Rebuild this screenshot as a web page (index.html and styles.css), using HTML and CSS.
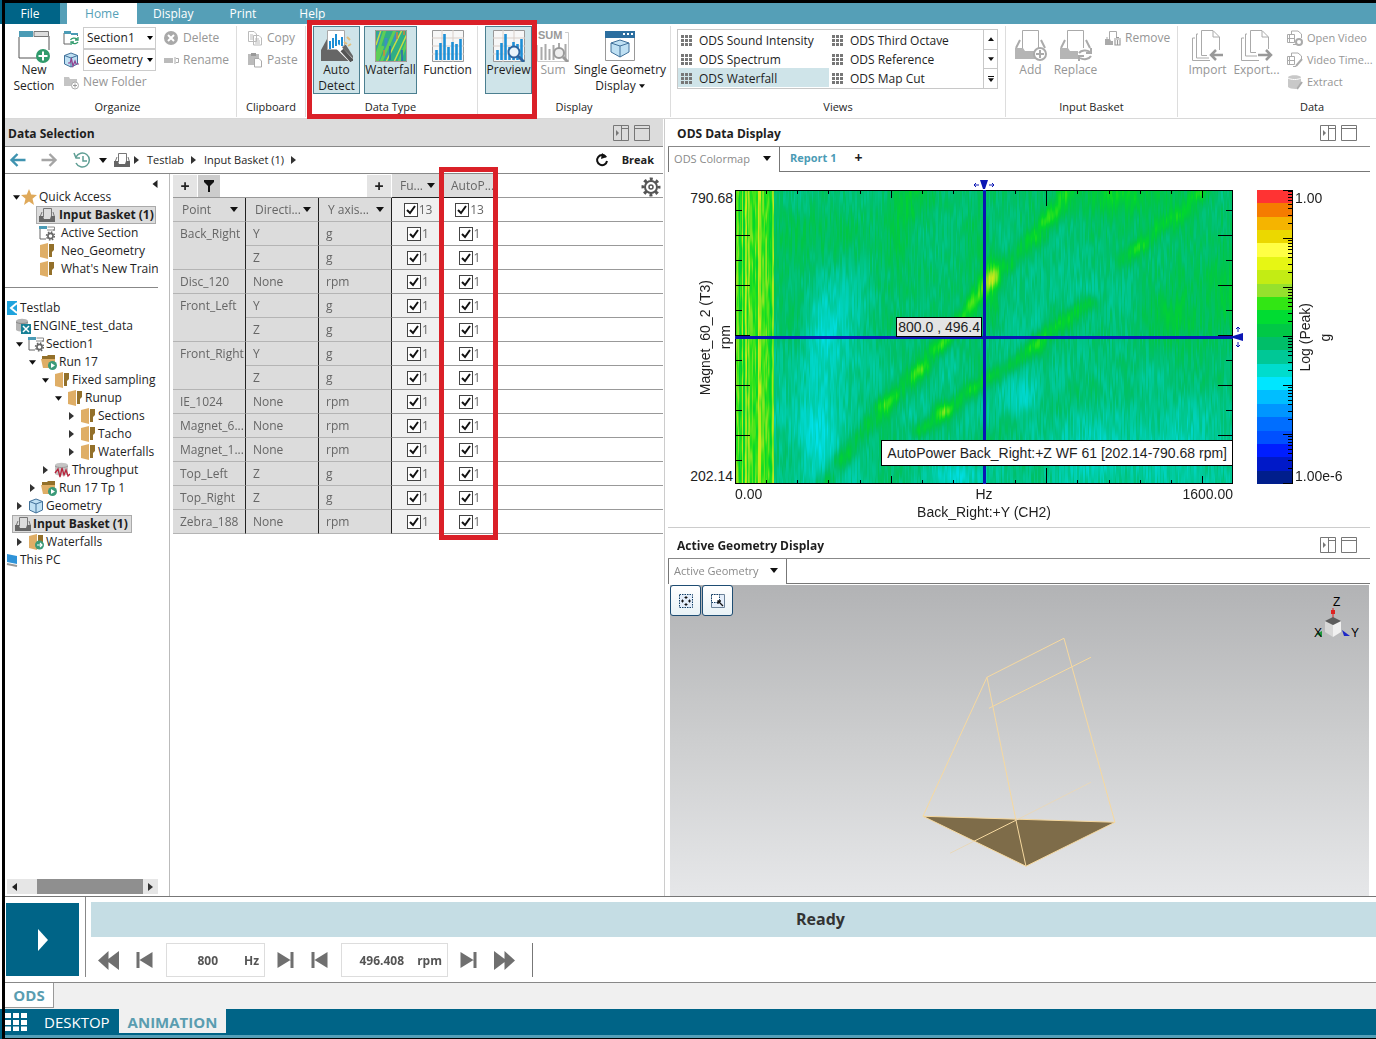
FILE: index.html
```html
<!DOCTYPE html>
<html lang="en">
<head>
<meta charset="utf-8">
<title>Testlab - Animation</title>
<link rel="stylesheet" href="styles.css">
</head>
<body>
<svg class="defs" width="0" height="0" aria-hidden="true">
  <defs>
    <symbol id="i-newsection" viewBox="0 0 32 34"><path d="M1 7V28H19M31 6V20" fill="none" stroke="#555"/><path d="M1 1H15V7H1z" fill="#4b9bb5"/><path d="M16 1.500H30.500V6.500H16z" fill="#ddd" stroke="#777"/><circle cx="25" cy="26" r="7" fill="#2f9a6b"/><path d="M25 21.500V30.500M20.500 26H29.500" stroke="#fff" stroke-width="2"/></symbol>
    <symbol id="i-sectionsync" viewBox="0 0 16 16"><path d="M1 3V14H7M14.500 4V6" fill="none" stroke="#666"/><path d="M1 1H8V4H1zM8 3H15V5H8z" fill="#4b9bb5"/><path d="M7.500 10A4 3 0 0 1 14 9M15 7V10H12M15 12A4 3 0 0 1 9 13M8 15V12H11" fill="none" stroke="#2f9a6b" stroke-width="1.300"/></symbol>
    <symbol id="i-cube" viewBox="0 0 16 16"><path d="M8 1L14.500 3.500V12L8 15L1.500 12V3.500z" fill="#bfe0f3" stroke="#41719a"/><path d="M1.500 3.500L8 6L14.500 3.500M8 6V15" fill="none" stroke="#41719a"/></symbol>
    <symbol id="i-cubewave" viewBox="0 0 16 16"><path d="M8 1L14.500 3.500V12L8 15L1.500 12V3.500z" fill="#bfe0f3" stroke="#41719a"/><path d="M1.500 3.500L8 6L14.500 3.500M8 6V15" fill="none" stroke="#41719a"/><path d="M5 11H7L8.500 7L10 14L12 9L13 12H16" fill="none" stroke="#93418f" stroke-width="1.200"/></symbol>
    <symbol id="i-newfolder" viewBox="0 0 16 16"><path d="M1 3H6L7 5H14V12H1z" fill="#c4c4c4"/><circle cx="12" cy="11.500" r="3.500" fill="#fff" stroke="#aaa"/><path d="M12 9.500V13.500M10 11.500H14" stroke="#999"/></symbol>
    <symbol id="i-delete" viewBox="0 0 16 16"><circle cx="8" cy="8" r="7" fill="#a9a9a9"/><path d="M5 5L11 11M11 5L5 11" stroke="#fff" stroke-width="2"/></symbol>
    <symbol id="i-rename" viewBox="0 0 16 16"><path d="M1 6H10V11H1z" fill="#bbb"/><path d="M13 6.500H15.500V10.500H13M12 5V12" fill="none" stroke="#aaa"/></symbol>
    <symbol id="i-copy" viewBox="0 0 16 16"><path d="M1.500 1.500H7L9.500 4V11.500H1.500zM6.500 5.500H12L14.500 8V15H6.500z" fill="#fff" stroke="#bbb"/><path d="M3 5H6M3 7H6M3 9H6M8 9H12M8 11H13M8 13H13" stroke="#bbb"/></symbol>
    <symbol id="i-paste" viewBox="0 0 16 16"><path d="M1 2H12V13H1z" fill="#bbb"/><path d="M4 1H9V4H4z" fill="#999"/><path d="M7.500 6.500H12L14.500 9V15H7.500z" fill="#fff" stroke="#aaa"/></symbol>
    <symbol id="i-auto" viewBox="0 0 32 32"><path d="M6 9L0 20V31H32V26L25 15z" fill="#666"/><path d="M6.500 .500H23.500V15L19 19.500H6.500z" fill="#fff" stroke="#aaa"/><path d="M9 19V11M12 18V8M15 16V4M18 17V10M21 16V7" stroke="#1d8fd6" stroke-width="2"/><path d="M16 16L30 30" stroke="#fff" stroke-width="5"/><path d="M21 20L31 31" stroke="#555" stroke-width="4"/><path d="M26 7L29 10M30 14L27 16M23 12L26 14" stroke="#e3bf7d" stroke-width="2"/></symbol>
    <symbol id="i-water" viewBox="0 0 32 32"><path d="M0 0H32V32H0z" fill="#2fae86"/><path d="M4 2V32M11 8V28M20 0V12" stroke="#3d8fc0" stroke-width="3"/><path d="M0 30L10 0M6 32L20 0M24 32L32 12M2 32L8 16" stroke="#5fce56" stroke-width="3"/><path d="M11 32L27 0M19 32L32 4M1 15L6 0" stroke="#c9dc45" stroke-width="1.500"/><path d="M15 16V30M27 20V32" stroke="#2a63b8" stroke-width="1.500"/><path d="M22 2V9M29 1V5M9 20V26" stroke="#d2813d" stroke-width="1.500"/><path d="M.500 .500H31.500V31.500H.500z" fill="none" stroke="#a99"/></symbol>
    <symbol id="i-func" viewBox="0 0 32 32"><path d="M.500 .500H31.500V31.500H.500z" fill="#f7f7f7" stroke="#999"/><path d="M0 8H32M0 16H32M0 24H32M10 0V32M21 0V32" stroke="#d9cfc9"/><path d="M4.500 30V20M8.500 30V13M12.500 30V4M16.500 30V17M20.500 30V12M24.500 30V14M28.500 30V9" stroke="#1d8fd6" stroke-width="2.600"/></symbol>
    <symbol id="i-preview" viewBox="0 0 32 32"><use href="#i-func"/><circle cx="21" cy="22" r="5.500" fill="#eaf4fa" stroke="#2c64a0" stroke-width="2"/><path d="M25 26L31 32" stroke="#2c64a0" stroke-width="3"/></symbol>
    <symbol id="i-sum" viewBox="0 0 32 32"><path d="M.500 15V31.500H31.500V15M28 2.500H31.500V15" fill="none" stroke="#ccc"/><path d="M4.500 30V17M8.500 30V14M12.500 30V19M16.500 30V15M28.500 30V14M22 18V13" stroke="#aaa" stroke-width="2"/><circle cx="22" cy="23" r="5" fill="#eee" stroke="#999" stroke-width="2"/><path d="M26 27L31 32" stroke="#999" stroke-width="3"/></symbol>
    <symbol id="i-single" viewBox="0 0 32 32"><path d="M1.500 2V30.500H30.500V2" fill="#fff" stroke="#999"/><path d="M1 1H31V8H1z" fill="#2c6e9f"/><path d="M19 4H21M23 4H25M27 4H29" stroke="#fff" stroke-width="2"/><path d="M16 10L25 13V22L16 27L7 22V13z" fill="#bfe0f3" stroke="#41719a"/><path d="M7 13L16 16L25 13M16 16V27" fill="none" stroke="#41719a"/></symbol>
    <symbol id="i-grid9" viewBox="0 0 12 12"><path d="M0 1.500H3M4 1.500H7M8 1.500H11M0 5.500H3M4 5.500H7M8 5.500H11M0 9.500H3M4 9.500H7M8 9.500H11" stroke="#777" stroke-width="3"/></symbol>
    <symbol id="i-add" viewBox="0 0 32 32"><path d="M7.500 18V.500H23.500V18" fill="none" stroke="#aaa"/><path d="M5 10L1 18M26 10L30 18" fill="none" stroke="#aaa" stroke-width="2"/><path d="M0 18H8L10 21H20V29H0z" fill="#b5b5b5"/><circle cx="25" cy="24" r="6" fill="#fff" stroke="#aaa" stroke-width="2"/><path d="M25 20V28M21 24H29" stroke="#aaa" stroke-width="2"/></symbol>
    <symbol id="i-replace" viewBox="0 0 32 32"><path d="M7.500 18V.500H23.500V18" fill="none" stroke="#aaa"/><path d="M5 10L1 18M26 10L30 18" fill="none" stroke="#aaa" stroke-width="2"/><path d="M0 18H8L10 21H18V29H0z" fill="#b5b5b5"/><path d="M19 23A7 5 0 0 1 30 22M31 18V23H26M31 26A7 5 0 0 1 20 28M19 31V26H24" fill="none" stroke="#aaa" stroke-width="2"/></symbol>
    <symbol id="i-remove" viewBox="0 0 16 16"><path d="M4.500 9V1.500H11.500V7M2 7V9" fill="none" stroke="#aaa"/><path d="M0 9H5L6 11H8V15H0z" fill="#aaa"/><path d="M9 9H16M10 10V15H15V10M12.500 10V15M11 7.500H14" fill="none" stroke="#999" stroke-width="1.200"/></symbol>
    <symbol id="i-import" viewBox="0 0 32 32"><path d="M15 25.500H9.500V.500H21L27.500 7V20M21 1V7H27M6 4H4.500V28H17M3 8H.500V30.500H18" fill="none" stroke="#aaa"/><path d="M31 25H19M24 20L19 25L24 30" fill="none" stroke="#999" stroke-width="2.500"/></symbol>
    <symbol id="i-export" viewBox="0 0 32 32"><path d="M15 22.500H9.500V.500H21L27.500 7V19M21 1V7H27M6 4H4.500V26H16M3 8H.500V30.500H18" fill="none" stroke="#aaa"/><path d="M17 25H30M25 20L30 25L25 30" fill="none" stroke="#999" stroke-width="2.500"/></symbol>
    <symbol id="i-video" viewBox="0 0 16 16"><path d="M4.500 4V1H11L14.500 4V8M.500 4.500H7.500V12.500H.500zM2.500 5V12M.500 8.500H7.500M6 14.500H10" fill="none" stroke="#aaa"/><circle cx="12" cy="12" r="3" fill="none" stroke="#aaa" stroke-width="2"/></symbol>
    <symbol id="i-videotime" viewBox="0 0 16 16"><path d="M4.500 4V1H11L14.500 4V8M.500 4.500H7.500V12.500H.500zM2.500 5V12M.500 8.500H7.500M6 14.500H9" fill="none" stroke="#aaa"/><path d="M15 7L9 14" stroke="#aaa" stroke-width="2"/></symbol>
    <symbol id="i-extract" viewBox="0 0 16 16"><path d="M1 3C3 .500 12 .500 14 3V9L9 15C5 15 2 14 1 13z" fill="#c8c8c8"/><path d="M1 4C4 6 11 6 14 4" fill="none" stroke="#fff"/><path d="M15 8L10 15" stroke="#aaa" stroke-width="2"/></symbol>
    <symbol id="i-basket" viewBox="0 0 16 16"><path d="M4.500 10V1.500H12.500V10M3 5L1 10M14 5L15.500 10" fill="none" stroke="#777"/><path d="M0 9H4L5 12H11L12 9H16V15H0z" fill="#666"/></symbol>
    <symbol id="i-section" viewBox="0 0 16 16"><path d="M1 3V14H7M15 4V6" fill="none" stroke="#666"/><path d="M0 1H8V4H0z" fill="#4b9bb5"/><path d="M8.500 2H15.500V5H8" fill="none" stroke="#888"/><circle cx="11.500" cy="11" r="2.600" fill="#fff" stroke="#666" stroke-width="1.600"/><circle cx="11.500" cy="11" r="4" fill="none" stroke="#666" stroke-width="1.400" stroke-dasharray="1.500 1.640"/></symbol>
    <symbol id="i-folder" viewBox="0 0 16 16"><path d="M1 2L9 0V16L1 14z" fill="#dfae66"/><path d="M10 1H15V7L13 9V14H10z" fill="#93702a"/></symbol>
    <symbol id="i-run" viewBox="0 0 16 16"><path d="M1 2H6L7 1H14V5H1z" fill="#93702a"/><path d="M0 5H14V14H2z" fill="#dfae66"/><circle cx="11.500" cy="11.500" r="4.500" fill="#3a9a78"/><path d="M10 9L14 11.500L10 14z" fill="#fff"/></symbol>
    <symbol id="i-wfolder" viewBox="0 0 16 16"><path d="M1 2L9 0V16L1 14z" fill="#dfae66"/><path d="M10 1H15V9H10z" fill="#93702a"/><circle cx="11.500" cy="11" r="4.500" fill="#3a9a78"/><path d="M9 11H14M12 9L14 11L12 13" fill="none" stroke="#fff" stroke-width="1.200"/></symbol>
    <symbol id="i-db" viewBox="0 0 16 16"><path d="M1 3C2 0 12 0 13 3V12C11 14 3 14 1 12z" fill="#b5b5b5"/><path d="M1 4C3 6 11 6 13 4" fill="none" stroke="#888"/><path d="M6 6H16V16H6z" fill="#178096"/><path d="M8 8L14 14M14 8L8 14" stroke="#fff" stroke-width="1.500"/></symbol>
    <symbol id="i-through" viewBox="0 0 16 16"><path d="M1 3C2 0 13 0 14 3V12C12 14 3 14 1 12z" fill="#c4c4c4"/><path d="M1 4C3 6 12 6 14 4" fill="none" stroke="#999"/><path d="M1 11L4 7L6 15L8 6L10 13L12 8L14 14L16 12" fill="none" stroke="#b9243c" stroke-width="1.300"/></symbol>
    <symbol id="i-testlab" viewBox="0 0 16 16"><path d="M5 1H15V15H5z" fill="#1fa3dd"/><path d="M15 3L9 8L15 13" fill="none" stroke="#fff" stroke-width="2"/></symbol>
    <symbol id="i-pc" viewBox="0 0 16 16"><path d="M5 2L15 4V12L5 10z" fill="#2f93d8"/><path d="M5 12L15 14" stroke="#999" stroke-width="2"/></symbol>
    <symbol id="i-star" viewBox="0 0 16 16"><path d="M8 0L10.200 5.500L16 6L11.500 9.800L13 16L8 12.500L3 16L4.500 9.800L0 6L5.800 5.500z" fill="#dfa95a"/></symbol>
    <symbol id="i-back" viewBox="0 0 16 14"><path d="M16 7H2M8 1L2 7L8 13" fill="none" stroke="#3f93b0" stroke-width="2.400"/></symbol>
    <symbol id="i-fwd" viewBox="0 0 16 14"><path d="M0 7H14M8 1L14 7L8 13" fill="none" stroke="#a5a5a5" stroke-width="2.400"/></symbol>
    <symbol id="i-history" viewBox="0 0 18 16"><path d="M3 5A7 7 0 1 1 3 11M1 1L3 6H7M10 4V9H14" fill="none" stroke="#5f9e94" stroke-width="1.500"/></symbol>
    <symbol id="i-refresh" viewBox="0 0 14 14"><path d="M11 4A5 5 0 1 0 12 8" fill="none" stroke="#111" stroke-width="2"/><path d="M7 0L12 4L6 6z" fill="#111"/></symbol>
    <symbol id="i-gear" viewBox="0 0 20 20"><circle cx="10" cy="10" r="6" fill="none" stroke="#555" stroke-width="2"/><circle cx="10" cy="10" r="8" fill="none" stroke="#555" stroke-width="3" stroke-dasharray="3 3.283" stroke-dashoffset="1.500"/><circle cx="10" cy="10" r="2" fill="none" stroke="#555" stroke-width="1.500"/></symbol>
    <symbol id="i-dock" viewBox="0 0 16 16"><path d="M.500 .500H15.500V15.500H.500zM8.500 .500V15.500M8.500 3.500H15.500" fill="none" stroke="#777"/><path d="M3 5L6 8L3 11z" fill="#777"/></symbol>
    <symbol id="i-max" viewBox="0 0 16 16"><path d="M.500 .500H15.500V15.500H.500zM.500 3.500H15.500" fill="none" stroke="#777"/></symbol>
    <symbol id="i-down" viewBox="0 0 8 5"><path d="M0 0H8L4 5z" fill="#111"/></symbol>
    <symbol id="i-right" viewBox="0 0 5 8"><path d="M0 0V8L5 4z" fill="#333"/></symbol>
    <symbol id="i-left" viewBox="0 0 5 8"><path d="M5 0V8L0 4z" fill="#222"/></symbol>
    <symbol id="i-filter" viewBox="0 0 10 12"><path d="M0 0H10V2L6 6V12H4V6L0 2z" fill="#111"/></symbol>
    <symbol id="i-rew" viewBox="0 0 20 18"><path d="M10 0V18L0 9zM20 0V18L8 9z" fill="#6f6f6f"/></symbol>
    <symbol id="i-ff" viewBox="0 0 20 18"><path d="M10 0V18L20 9zM0 0V18L12 9z" fill="#6f6f6f"/></symbol>
    <symbol id="i-prev" viewBox="0 0 16 16"><path d="M0 0H3V16H0zM16 0V16L3 8z" fill="#6f6f6f"/></symbol>
    <symbol id="i-next" viewBox="0 0 16 16"><path d="M13 0H16V16H13zM0 0V16L13 8z" fill="#6f6f6f"/></symbol>
  </defs>
</svg>

<div class="window">
  <nav class="menubar">
    <button class="menu menu-file">File</button>
    <button class="menu menu-home">Home</button>
    <button class="menu menu-display">Display</button>
    <button class="menu menu-print">Print</button>
    <button class="menu">Help</button>
  </nav>

  <header class="ribbon">
    <section class="group g-organize">
      <div class="group-body">
        <button class="big"><svg class="ic32 tall"><use href="#i-newsection"/></svg><span>New<br>Section</span></button>
        <div class="stack">
          <div class="field"><svg class="ic16"><use href="#i-sectionsync"/></svg><select class="combo" aria-label="Section"><option>Section1</option></select></div>
          <div class="field"><svg class="ic16"><use href="#i-cubewave"/></svg><select class="combo" aria-label="Geometry"><option>Geometry</option></select></div>
          <button class="small off"><svg class="ic16"><use href="#i-newfolder"/></svg>New Folder</button>
        </div>
        <div class="stack actions">
          <button class="small off"><svg class="ic16"><use href="#i-delete"/></svg>Delete</button>
          <button class="small off"><svg class="ic16"><use href="#i-rename"/></svg>Rename</button>
        </div>
      </div>
      <h2>Organize</h2>
    </section>
    <section class="group g-clipboard">
      <div class="group-body"><div class="stack">
        <button class="small off"><svg class="ic16"><use href="#i-copy"/></svg>Copy</button>
        <button class="small off"><svg class="ic16"><use href="#i-paste"/></svg>Paste</button>
      </div></div>
      <h2>Clipboard</h2>
    </section>
    <section class="group g-type">
      <div class="group-body">
        <button class="big on"><svg class="ic32"><use href="#i-auto"/></svg><span>Auto<br>Detect</span></button>
        <button class="big on"><svg class="ic32"><use href="#i-water"/></svg><span>Waterfall</span></button>
        <button class="big"><svg class="ic32"><use href="#i-func"/></svg><span>Function</span></button>
      </div>
      <h2>Data Type</h2>
    </section>
    <section class="group g-display">
      <div class="group-body">
        <button class="big on"><svg class="ic32"><use href="#i-preview"/></svg><span>Preview</span></button>
        <button class="big off sum"><svg class="ic32"><use href="#i-sum"/></svg><b class="sum-tag">SUM</b><span>Sum</span></button>
        <button class="big single"><svg class="ic32"><use href="#i-single"/></svg><span>Single Geometry<br>Display <svg class="caret"><use href="#i-down"/></svg></span></button>
      </div>
      <h2>Display</h2>
    </section>
    <section class="group g-views">
      <div class="group-body">
        <div class="gallery">
          <div class="views">
            <button><svg class="ic12"><use href="#i-grid9"/></svg>ODS Sound Intensity</button>
            <button><svg class="ic12"><use href="#i-grid9"/></svg>ODS Third Octave</button>
            <button><svg class="ic12"><use href="#i-grid9"/></svg>ODS Spectrum</button>
            <button><svg class="ic12"><use href="#i-grid9"/></svg>ODS Reference</button>
            <button class="current"><svg class="ic12"><use href="#i-grid9"/></svg>ODS Waterfall</button>
            <button><svg class="ic12"><use href="#i-grid9"/></svg>ODS Map Cut</button>
          </div>
          <div class="spin">
            <button aria-label="Up"><svg class="caret up"><use href="#i-down"/></svg></button>
            <button aria-label="Down"><svg class="caret"><use href="#i-down"/></svg></button>
            <button aria-label="More" class="more"><svg class="caret"><use href="#i-down"/></svg></button>
          </div>
        </div>
      </div>
      <h2>Views</h2>
    </section>
    <section class="group g-basket">
      <div class="group-body">
        <button class="big off"><svg class="ic32"><use href="#i-add"/></svg><span>Add</span></button>
        <button class="big off"><svg class="ic32"><use href="#i-replace"/></svg><span>Replace</span></button>
        <div class="stack"><button class="small off"><svg class="ic16"><use href="#i-remove"/></svg>Remove</button></div>
      </div>
      <h2>Input Basket</h2>
    </section>
    <section class="group g-data">
      <div class="group-body">
        <button class="big off"><svg class="ic32"><use href="#i-import"/></svg><span>Import</span></button>
        <button class="big off"><svg class="ic32"><use href="#i-export"/></svg><span>Export...</span></button>
        <div class="stack">
          <button class="small off"><svg class="ic16"><use href="#i-video"/></svg>Open Video</button>
          <button class="small off"><svg class="ic16"><use href="#i-videotime"/></svg>Video Time...</button>
          <button class="small off"><svg class="ic16"><use href="#i-extract"/></svg>Extract</button>
        </div>
      </div>
      <h2>Data</h2>
    </section>
    <div class="mark mark-ribbon"></div>
  </header>

  <main class="main">
    <section class="selection">
      <div class="titlebar grey"><h1>Data Selection</h1><span class="winbtns"><svg class="ic16"><use href="#i-dock"/></svg><svg class="ic16"><use href="#i-max"/></svg></span></div>
      <div class="crumbs">
        <button aria-label="Back"><svg class="arrow"><use href="#i-back"/></svg></button>
        <button aria-label="Forward" class="fwd"><svg class="arrow"><use href="#i-fwd"/></svg></button>
        <button aria-label="History" class="hist"><svg class="history"><use href="#i-history"/></svg><svg class="caret"><use href="#i-down"/></svg></button>
        <svg class="ic16"><use href="#i-basket"/></svg><svg class="tri"><use href="#i-right"/></svg>
        <a href="#testlab">Testlab</a><svg class="tri"><use href="#i-right"/></svg>
        <a href="#basket">Input Basket (1)</a><svg class="tri"><use href="#i-right"/></svg>
        <button class="break"><svg class="ic14"><use href="#i-refresh"/></svg>Break</button>
      </div>
      <div class="selection-body">
        <aside class="side">
          <svg class="collapse"><use href="#i-left"/></svg>
          <ul class="tree quick">
            <li><div class="node"><svg class="down"><use href="#i-down"/></svg><svg class="ic16"><use href="#i-star"/></svg>Quick Access</div>
              <ul>
                <li><div class="node leaf"><span class="picked"><svg class="ic16"><use href="#i-basket"/></svg>Input Basket (1)</span></div></li>
                <li><div class="node leaf"><svg class="ic16"><use href="#i-section"/></svg>Active Section</div></li>
                <li><div class="node leaf"><svg class="ic16"><use href="#i-folder"/></svg>Neo_Geometry</div></li>
                <li><div class="node leaf"><svg class="ic16"><use href="#i-folder"/></svg>What's New Training</div></li>
              </ul></li>
          </ul>
          <ul class="tree places">
            <li><div class="node leaf"><svg class="ic16"><use href="#i-testlab"/></svg>Testlab</div>
              <ul>
                <li><div class="node leaf"><svg class="ic16"><use href="#i-db"/></svg>ENGINE_test_data</div>
                  <ul>
                    <li><div class="node"><svg class="down"><use href="#i-down"/></svg><svg class="ic16"><use href="#i-section"/></svg>Section1</div>
                      <ul>
                        <li><div class="node"><svg class="down"><use href="#i-down"/></svg><svg class="ic16"><use href="#i-run"/></svg>Run 17</div>
                          <ul>
                            <li><div class="node"><svg class="down"><use href="#i-down"/></svg><svg class="ic16"><use href="#i-folder"/></svg>Fixed sampling</div>
                              <ul>
                                <li><div class="node"><svg class="down"><use href="#i-down"/></svg><svg class="ic16"><use href="#i-folder"/></svg>Runup</div>
                                  <ul>
                                    <li><div class="node"><svg class="side-tri"><use href="#i-right"/></svg><svg class="ic16"><use href="#i-folder"/></svg>Sections</div></li>
                                    <li><div class="node"><svg class="side-tri"><use href="#i-right"/></svg><svg class="ic16"><use href="#i-folder"/></svg>Tacho</div></li>
                                    <li><div class="node"><svg class="side-tri"><use href="#i-right"/></svg><svg class="ic16"><use href="#i-folder"/></svg>Waterfalls</div></li>
                                  </ul></li>
                              </ul></li>
                            <li><div class="node"><svg class="side-tri"><use href="#i-right"/></svg><svg class="ic16"><use href="#i-through"/></svg>Throughput</div></li>
                          </ul></li>
                        <li><div class="node"><svg class="side-tri"><use href="#i-right"/></svg><svg class="ic16"><use href="#i-run"/></svg>Run 17 Tp 1</div></li>
                      </ul></li>
                    <li><div class="node"><svg class="side-tri"><use href="#i-right"/></svg><svg class="ic16"><use href="#i-cube"/></svg>Geometry</div></li>
                  </ul></li>
                <li><div class="node leaf"><span class="picked"><svg class="ic16"><use href="#i-basket"/></svg>Input Basket (1)</span></div>
                  <ul>
                    <li><div class="node"><svg class="side-tri"><use href="#i-right"/></svg><svg class="ic16"><use href="#i-wfolder"/></svg>Waterfalls</div></li>
                  </ul></li>
              </ul></li>
            <li><div class="node leaf"><svg class="ic16"><use href="#i-pc"/></svg>This PC</div></li>
          </ul>
          <div class="scroll"><svg class="side-tri"><use href="#i-left"/></svg><div class="thumb"></div><svg class="side-tri"><use href="#i-right"/></svg></div>
        </aside>
        <div class="grid-area">
          <table class="pivot">
            <colgroup><col class="c-key"><col class="c-key"><col class="c-key"><col class="c-fun"><col class="c-auto"><col></colgroup>
            <thead>
              <tr class="tools">
                <th colspan="3"><div class="toolrow"><button aria-label="Add row field">+</button><button class="filter" aria-label="Filter"><svg class="funnel"><use href="#i-filter"/></svg></button><button class="last" aria-label="Add column field">+</button></div></th>
                <th class="colhead"><span>Fu...</span><svg class="caret"><use href="#i-down"/></svg></th>
                <th class="colhead">AutoP...</th>
                <th class="rest"><svg class="gear"><use href="#i-gear"/></svg></th>
              </tr>
              <tr class="fields">
                <th class="key"><div>Point<svg class="caret"><use href="#i-down"/></svg></div></th>
                <th class="key"><div>Directi...<svg class="caret"><use href="#i-down"/></svg></div></th>
                <th class="key"><div>Y axis...<svg class="caret"><use href="#i-down"/></svg></div></th>
                <td class="fun"><label><input type="checkbox" checked>13</label></td><td class="auto"><label><input type="checkbox" checked>13</label></td><td></td>
              </tr>
            </thead>
            <tbody>
              <tr><th class="key" rowspan="2">Back_Right</th><td class="key">Y</td><td class="key">g</td><td class="fun"><label><input type="checkbox" checked>1</label></td><td class="auto"><label><input type="checkbox" checked>1</label></td><td></td></tr>
              <tr><td class="key">Z</td><td class="key">g</td><td class="fun"><label><input type="checkbox" checked>1</label></td><td class="auto"><label><input type="checkbox" checked>1</label></td><td></td></tr>
              <tr><th class="key">Disc_120</th><td class="key">None</td><td class="key">rpm</td><td class="fun"><label><input type="checkbox" checked>1</label></td><td class="auto"><label><input type="checkbox" checked>1</label></td><td></td></tr>
              <tr><th class="key" rowspan="2">Front_Left</th><td class="key">Y</td><td class="key">g</td><td class="fun"><label><input type="checkbox" checked>1</label></td><td class="auto"><label><input type="checkbox" checked>1</label></td><td></td></tr>
              <tr><td class="key">Z</td><td class="key">g</td><td class="fun"><label><input type="checkbox" checked>1</label></td><td class="auto"><label><input type="checkbox" checked>1</label></td><td></td></tr>
              <tr><th class="key" rowspan="2">Front_Right</th><td class="key">Y</td><td class="key">g</td><td class="fun"><label><input type="checkbox" checked>1</label></td><td class="auto"><label><input type="checkbox" checked>1</label></td><td></td></tr>
              <tr><td class="key">Z</td><td class="key">g</td><td class="fun"><label><input type="checkbox" checked>1</label></td><td class="auto"><label><input type="checkbox" checked>1</label></td><td></td></tr>
              <tr><th class="key">IE_1024</th><td class="key">None</td><td class="key">rpm</td><td class="fun"><label><input type="checkbox" checked>1</label></td><td class="auto"><label><input type="checkbox" checked>1</label></td><td></td></tr>
              <tr><th class="key">Magnet_6...</th><td class="key">None</td><td class="key">rpm</td><td class="fun"><label><input type="checkbox" checked>1</label></td><td class="auto"><label><input type="checkbox" checked>1</label></td><td></td></tr>
              <tr><th class="key">Magnet_1...</th><td class="key">None</td><td class="key">rpm</td><td class="fun"><label><input type="checkbox" checked>1</label></td><td class="auto"><label><input type="checkbox" checked>1</label></td><td></td></tr>
              <tr><th class="key">Top_Left</th><td class="key">Z</td><td class="key">g</td><td class="fun"><label><input type="checkbox" checked>1</label></td><td class="auto"><label><input type="checkbox" checked>1</label></td><td></td></tr>
              <tr><th class="key">Top_Right</th><td class="key">Z</td><td class="key">g</td><td class="fun"><label><input type="checkbox" checked>1</label></td><td class="auto"><label><input type="checkbox" checked>1</label></td><td></td></tr>
              <tr><th class="key">Zebra_188</th><td class="key">None</td><td class="key">rpm</td><td class="fun"><label><input type="checkbox" checked>1</label></td><td class="auto"><label><input type="checkbox" checked>1</label></td><td></td></tr>
            </tbody>
          </table>
          <div class="mark mark-column"></div>
        </div>
      </div>
    </section>

    <div class="displays">
      <section class="pane pane-plot">
        <div class="titlebar"><h1>ODS Data Display</h1><span class="winbtns"><svg class="ic16"><use href="#i-dock"/></svg><svg class="ic16"><use href="#i-max"/></svg></span></div>
        <div class="tabs"><button class="tab">ODS Colormap<svg class="caret"><use href="#i-down"/></svg></button><div class="tabline"><button class="report">Report 1</button><button class="plus" aria-label="Add report">+</button></div></div>
        <div class="plot">
          <div class="yaxis"><span>790.68</span><div class="vert">Magnet_60_2 (T3)<br>rpm</div><span>202.14</span></div>
          <div class="map">
            <canvas id="map"></canvas>
            <div class="cross-v"></div><div class="cross-h"></div>
            <svg class="grip-top" viewBox="0 0 22 10"><path d="M7 0H15L12 9H10z" fill="#0b16b4"/><path d="M6 5H1M3 3L1 5L3 7M16 5H21M19 3L21 5L19 7" fill="none" stroke="#0b16b4"/></svg>
            <svg class="grip-right" viewBox="0 0 10 22"><path d="M10 7V15L0 12V10z" fill="#0b16b4"/><path d="M5 6V1M3 3L5 1L7 3M5 16V21M3 19L5 21L7 19" fill="none" stroke="#0b16b4"/></svg>
            <div class="readout">800.0 , 496.4</div>
            <div class="legend">AutoPower Back_Right:+Z WF 61 [202.14-790.68 rpm]</div>
          </div>
          <canvas id="scale"></canvas>
          <div class="zaxis"><span>1.00</span><div class="vert">Log (Peak)<br>g</div><span>1.00e-6</span></div>
          <div class="xaxis"><span>0.00</span><span>Hz</span><span>1600.00</span></div>
          <div class="xname">Back_Right:+Y (CH2)</div>
        </div>
      </section>
      <section class="pane pane-geo">
        <div class="titlebar"><h1>Active Geometry Display</h1><span class="winbtns"><svg class="ic16"><use href="#i-dock"/></svg><svg class="ic16"><use href="#i-max"/></svg></span></div>
        <div class="tabs"><button class="tab">Active Geometry<svg class="caret"><use href="#i-down"/></svg></button><div class="tabline"></div></div>
        <div class="scene">
          <svg class="model" viewBox="670 585 699 310"><path d="M923 816L1115 822L1026 866z" fill="#7e6c49"/><path d="M923 816L987 677L1064 638L1115 822L1026 866L923 816L1115 822M987 677L1016 820L1026 866M989 708L1091 657" fill="none" stroke="#f6d9a0"/><path d="M950 853L974 841M1016 820L1091 782" fill="none" stroke="#e8d8bb"/><path d="M974 841L1016 820" stroke="#f6d9a0"/></svg>
          <div class="tools3d">
            <button aria-label="Fit"><svg viewBox="0 0 16 16" class="ic16"><path d="M1.500 1.500H14.500V14.500H1.500z" fill="#e4eefa" stroke="#123f66" stroke-dasharray="1.500 1"/><path d="M8 3V6M8 10V13M3 8H6M10 8H13M6.500 4.500H9.500M6.500 11.500H9.500M4.500 6.500V9.500M11.500 6.500V9.500" stroke="#111"/></svg></button>
            <button aria-label="Zoom area"><svg viewBox="0 0 16 16" class="ic16"><path d="M1.500 1.500H14.500V14.500H1.500z" fill="#e4eefa" stroke="#6b8299"/><path d="M1.500 1.500H9.500V9.500H1.500z" fill="#fff" stroke="#123f66" stroke-dasharray="1.500 1"/><path d="M8 8L13 13M8 11V8H11" fill="none" stroke="#111" stroke-width="1.300"/></svg></button>
          </div>
          <svg class="triad" viewBox="0 0 48 48"><text x="20" y="12">Z</text><path d="M20 14V24" stroke="#d22" /><path d="M18 16H22V20H18z" fill="#d22"/><path d="M12 27L20 31V43L12 38z" fill="#d8d8d8"/><path d="M20 31L28 27V38L20 43z" fill="#f0f0f0"/><path d="M12 27L20 23L28 27L20 31z" fill="#5c5c5c"/><path d="M3 40L9 37V43z" fill="#1e9a3a"/><path d="M29 36L37 42L31 42z" fill="#1e28c8"/><text x="1" y="43">X</text><text x="38" y="43">Y</text></svg>
        </div>
      </section>
    </div>
  </main>

  <section class="player">
    <button class="play" aria-label="Play"><svg viewBox="0 0 10 22" class="playtri"><path d="M0 0V22L10 11z" fill="#fff"/></svg></button>
    <div class="player-main">
      <div class="status">Ready</div>
      <div class="transport">
        <button aria-label="Fast back"><svg class="seek"><use href="#i-rew"/></svg></button>
        <button aria-label="Previous frequency"><svg class="step"><use href="#i-prev"/></svg></button>
        <label class="value"><input type="text" value="800" aria-label="Frequency">Hz</label>
        <button aria-label="Next frequency"><svg class="step"><use href="#i-next"/></svg></button>
        <button aria-label="Previous speed"><svg class="step"><use href="#i-prev"/></svg></button>
        <label class="value wide"><input type="text" value="496.408" aria-label="Speed">rpm</label>
        <button aria-label="Next speed"><svg class="step"><use href="#i-next"/></svg></button>
        <button aria-label="Fast forward"><svg class="seek"><use href="#i-ff"/></svg></button>
        <div class="endline"></div>
      </div>
    </div>
  </section>
  <div class="sheets"><button class="sheet">ODS</button></div>
  <footer class="taskbar">
    <svg class="apps" viewBox="0 0 23 18"><path d="M0 2.500H6M8 2.500H14M16 2.500H22M0 9.500H6M8 9.500H14M16 9.500H22M0 16H6M8 16H14M16 16H22" stroke="#fff" stroke-width="5"/></svg>
    <button class="task">DESKTOP</button><button class="task active">ANIMATION</button>
  </footer>
</div>
<script src="app.js"></script>
</body>
</html>
```
FILE: styles.css
```css
* { box-sizing: border-box; }
html, body { height: 100%; }
body {
  margin: 0;
  padding-left: 2px;
  font: 12px/16px "Open Sans", "Noto Sans", sans-serif;
  color: #1e1e1e;
  background: linear-gradient(#006487 24px, #fff 24px, #fff calc(100% - 30px), #006487 calc(100% - 30px));
}
button, input, select { font: inherit; color: inherit; border: 0; margin: 0; padding: 0; background: none; }
button { display: flex; align-items: center; white-space: nowrap; }
h1, h2 { margin: 0; font-size: 12px; }
svg { flex: none; display: block; }
a { color: inherit; text-decoration: none; }
ul { list-style: none; margin: 0; padding: 0; }
.defs { position: absolute; }
.ic12 { width: 12px; height: 12px; }
.ic14 { width: 14px; height: 14px; }
.ic16 { width: 16px; height: 16px; }
.ic32 { width: 32px; height: 32px; }
.caret { width: 8px; height: 5px; }
.tri, .side-tri { width: 5px; height: 8px; }

.window {
  display: flex;
  flex-direction: column;
  min-height: 100%;
  background: #fff;
  border-left: 3px solid #000;
  border-top: 3px solid #000;
  border-bottom: 1px solid #000;
  overflow: hidden;
}

/* menu strip */
.menubar { display: flex; height: 21px; background: #559fb7; color: #fff; }
.menu { justify-content: center; padding-right: 43px; }
.menu-file { width: 55px; padding: 0 5px 0 0; margin-right: 7px; background: #006487; }
.menu-home { width: 70px; padding: 0; margin-right: 16px; background: #fff; color: #559fb7; }
.menu-display { padding-right: 36px; }

/* ribbon */
.ribbon { display: flex; position: relative; height: 95px; border-bottom: 1px solid #d8d8d8; }
.group { flex: none; display: flex; flex-direction: column; justify-content: space-between; border-right: 1px solid #ddd; margin-top: 2px; margin-bottom: 1px; }
.group h2 { font-weight: 400; font-size: 11px; text-align: center; line-height: 20px; }
.group-body { display: flex; height: 68px; }
.big { flex-direction: column; align-items: center; height: 68px; padding-top: 3px; border: 1px solid transparent; line-height: 16px; }
.big span { text-align: center; }
.big .caret { display: inline-block; width: 6px; height: 4px; vertical-align: 2px; }
.tall { height: 34px; margin-bottom: -2px; }
.on { background: #cfe4e9; border-color: #4b7f90; }
.off { color: #969696; }
.stack { display: flex; flex-direction: column; padding-top: 1px; }
.small, .field { display: flex; align-items: center; gap: 4px; height: 22px; }
.combo { width: 73px; height: 22px; padding: 0 3px; border: 1px solid #ccc; appearance: none; background: url("data:image/svg+xml,%3Csvg xmlns='http://www.w3.org/2000/svg' width='6' height='4'%3E%3Cpath d='M0 0H6L3 4z'/%3E%3C/svg%3E") no-repeat right 2px center; }
.g-organize { width: 232px; }
.g-organize .big { width: 58px; }
.g-organize .stack:nth-child(2) { margin-right: 7px; }
.g-organize h2 { padding-right: 6px; }
.g-clipboard { width: 69px; }
.g-clipboard .stack { padding-left: 10px; }
.g-type { width: 172px; }
.g-type .group-body { padding-left: 7px; gap: 4px; }
.g-type .big:first-child { width: 47px; }
.g-type .big { width: 53px; }
.g-type h2 { padding-right: 2px; }
.g-display { width: 193px; }
.g-display .group-body { padding-left: 7px; }
.g-display .big { width: 47px; }
.g-display .sum { width: 42px; position: relative; }
.sum-tag { position: absolute; top: 2px; left: 5px; font: bold 11px/12px "Liberation Sans", sans-serif; color: #999; }
.g-display .single { width: 92px; }
.g-views { width: 335px; }
.g-views .group-body { padding: 3px 6px; }
.gallery { display: flex; width: 321px; height: 60px; border: 1px solid #c8c8c8; }
.views { flex: 1; display: grid; grid-template-columns: 151px 1fr; grid-auto-rows: 19px; }
.views button { gap: 6px; padding-left: 3px; padding-top: 2px; }
.views .current { background: #cfe4e9; }
.spin { width: 14px; display: flex; flex-direction: column; border-left: 1px solid #c8c8c8; }
.spin button { flex: 1; justify-content: center; border-bottom: 1px solid #c8c8c8; }
.spin button:last-child { border-bottom: 0; }
.spin .caret { width: 6px; height: 4px; }
.spin .up { transform: rotate(180deg); }
.spin .more { flex-direction: column; }
.more::before { content: ""; width: 6px; height: 1px; margin-bottom: 1px; background: #111; }
.g-basket { width: 172px; }
.g-basket .group-body { padding-left: 2px; }
.g-basket .big { width: 45px; }
.g-basket .stack { padding-left: 7px; }
.g-data { width: 268px; border-right: 0; }
.g-data .group-body { padding-left: 5px; }
.g-data .big { width: 49px; }
.g-data .stack { padding-left: 6px; font-size: 11px; }
.mark { position: absolute; border: 5px solid #da2028; pointer-events: none; z-index: 2; }
.mark-ribbon { left: 302px; top: -4px; width: 230px; height: 99px; }

/* main work area */
.main { flex: 1; display: flex; border-bottom: 1px solid #777; }
.selection { width: 48%; flex: none; display: flex; flex-direction: column; }
.titlebar { display: flex; align-items: center; justify-content: space-between; height: 28px; padding: 0 13px 0 9px; border-bottom: 1px solid #888; }
.titlebar h1 { line-height: 20px; padding-top: 2px; }
.grey { background: #dcdcdc; padding-left: 3px; }
.winbtns { display: flex; gap: 5px; }
.crumbs { display: flex; align-items: center; height: 27px; padding: 0 9px 0 4px; border-bottom: 1px solid #888; font-size: 11px; }
.arrow { width: 17px; height: 14px; }
.fwd { margin-left: 15px; }
.hist { gap: 8px; margin: 0 7px 0 15px; }
.history { width: 18px; height: 16px; }
.crumbs .tri { margin: 0 8px 0 7px; }
.crumbs .ic16 + .tri { margin-left: 4px; }
.break { gap: 13px; margin-left: auto; font-weight: 700; }
.selection-body { flex: 1; display: flex; }
.side { width: 165px; flex: none; display: flex; flex-direction: column; padding: 6px 11px 2px 0; border-right: 1px solid #bbb; overflow: hidden; }
.collapse { width: 6px; height: 8px; margin-left: auto; }
.node { display: flex; align-items: center; height: 18px; white-space: nowrap; }
.node > .ic16, .picked .ic16 { margin-right: 2px; }
.down { width: 7px; height: 5px; margin: 0 5px 0 2px; }
.side-tri { margin: 0 6px 0 3px; }
.leaf { padding-left: 14px; }
.picked { display: flex; align-items: center; height: 18px; margin-left: -3px; padding: 0 3px 0 2px; background: #dcdcdc; border: 1px solid #aaa; font-weight: 700; }
.quick { padding-left: 6px; padding-bottom: 9px; border-bottom: 1px solid #888; overflow: hidden; }
.quick > li > ul { padding-left: 14px; }
.quick .down { margin-right: 1px; }
.quick .leaf .ic16 { margin-right: 6px; }
.quick .picked .ic16 { margin-right: 4px; }
.quick .picked { padding-right: 1px; }
.places { margin: 11px 0 auto -17px; }
.places ul { padding-left: 13px; }
.scroll { display: flex; align-items: center; justify-content: space-between; height: 15px; margin: 0 0 0 2px; background: #e6e6e6; }
.scroll .side-tri { margin: 0 5px; }
.thumb { flex: 1; height: 15px; margin-left: 15px; background: #8f8f8f; }

/* pivot table */
.grid-area { flex: 1; position: relative; padding: 0 0 0 3px; }
.pivot { width: 100%; table-layout: fixed; border-collapse: separate; border-spacing: 0; color: #666; }
.pivot th, .pivot td { height: 24px; padding: 0; font-weight: 400; text-align: left; vertical-align: top; border-bottom: 1px solid #999; line-height: 23px; white-space: nowrap; }
.c-key { width: 73px; }
.c-fun { width: 51px; }
.c-auto { width: 52px; }
.pivot .key { padding-left: 7px; background: #dcdcdc; border-right: 1px solid #222; border-bottom-color: #b4b4b4; }
.fields div { display: flex; align-items: center; justify-content: space-between; padding: 0 7px 0 2px; }
.pivot .tools .colhead { background: #dcdcdc; padding-left: 8px; border-bottom-color: #222; border-right: 1px solid #eee; }
.colhead .caret { display: inline-block; margin-left: 4px; vertical-align: 2px; }
.toolrow { display: flex; height: 23px; padding-top: 1px; }
.toolrow button { width: 24px; justify-content: center; background: #e4e4e4; font-weight: 700; font-size: 16px; color: #222; }
.toolrow .filter { width: 22px; margin-left: 1px; background: #ccc; }
.toolrow .last { margin-left: auto; margin-right: 1px; }
.funnel { width: 10px; height: 12px; }
.gear { width: 20px; height: 20px; margin: 3px 2px 0 auto; }
.fun { background: #f0f0f0; }
.pivot label { display: flex; align-items: center; justify-content: center; gap: 1px; height: 23px; padding-left: 1px; }
.pivot input { appearance: none; width: 14px; height: 14px; border: 1px solid #444; background: #fff; }
.pivot input:checked { background: #fff url("data:image/svg+xml,%3Csvg xmlns='http://www.w3.org/2000/svg' width='12' height='12'%3E%3Cpath d='M2 6L5 9L10 2' fill='none' stroke='%23111' stroke-width='2'/%3E%3C/svg%3E") center no-repeat; }
.mark-column { left: 269px; top: -7px; width: 59px; height: 373px; }

/* display panes */
.displays { flex: 1; display: flex; flex-direction: column; border-left: 1px solid #ccc; margin-left: 1px; padding-left: 3px; padding-right: 6px; }
.pane { display: flex; flex-direction: column; min-height: 0; }
.pane-plot { flex: 409 1 0; border-bottom: 1px solid #ccc; }
.pane-geo { flex: 368 1 0; }
.pane-geo .titlebar { height: 31px; padding-top: 3px; }
.tabs { display: flex; height: 25px; }
.tab { width: 111px; justify-content: space-between; padding: 0 8px 2px 5px; border-left: 1px solid #777; color: #8a8a8a; font-size: 11px; }
.pane-geo .tab { width: 118px; }
.tabline { flex: 1; display: flex; align-items: center; gap: 18px; padding: 0 10px 2px; border-left: 1px solid #777; border-bottom: 1px solid #777; }
.report { color: #4b9bb5; font-weight: 700; font-size: 11px; }
.plus { font-weight: 700; font-size: 14px; }
.plot { flex: 1; display: grid; grid-template: 1fr 18px 18px / 67px 1fr 36px 77px; padding: 18px 0 7px; font: 14px/16px "Liberation Sans", sans-serif; }
.yaxis, .zaxis { display: flex; flex-direction: column; justify-content: space-between; }
.yaxis { align-items: flex-end; }
.yaxis span { padding-right: 2px; }
.zaxis { padding-left: 2px; }
.vert { writing-mode: vertical-rl; transform: rotate(180deg); line-height: 20px; text-align: center; white-space: nowrap; }
.map { position: relative; margin-right: 24px; min-width: 0; min-height: 0; }
.map canvas { position: absolute; width: 100%; height: 100%; }
#scale { width: 100%; height: 100%; min-height: 0; contain: size; }
.cross-v { position: absolute; left: 50%; top: 0; bottom: 0; width: 3px; margin-left: -1px; background: #0b16b4; }
.cross-h { position: absolute; top: 50%; left: 0; right: 0; height: 3px; margin-top: -1px; background: #0b16b4; }
.grip-top { position: absolute; left: 50%; top: -10px; width: 22px; height: 10px; margin-left: -11px; }
.grip-right { position: absolute; top: 50%; right: -10px; width: 10px; height: 22px; margin-top: -11px; }
.readout { position: absolute; right: calc(50% + 2px); bottom: 50%; padding: 1px; background: #e4e4e4; border: 1px solid #000; white-space: nowrap; }
.legend { position: absolute; right: 0; bottom: 18px; padding: 4px 5px; background: #fff; border: 1px solid #000; white-space: nowrap; }
.xaxis { grid-column: 2; display: grid; grid-template-columns: 1fr auto 1fr; margin-right: 24px; padding-top: 2px; }
.xaxis span:last-child { text-align: right; }
.xname { grid-column: 2; margin-right: 24px; padding-top: 2px; text-align: center; }
.scene { flex: 1; position: relative; margin: 1px 1px 0 2px; background: linear-gradient(#b2b3b5, #cdcecf 50%, #e6e7e9); }
.model { position: absolute; width: 100%; height: 100%; }
.tools3d { position: absolute; display: flex; left: 0; top: 0; gap: 1px; }
.tools3d button { width: 31px; height: 31px; justify-content: center; border: 1px solid #1e4d73; border-radius: 3px; background: linear-gradient(#fff, #e8f2f6); }
.triad { position: absolute; right: 8px; top: 9px; width: 48px; height: 48px; font: 12px "Liberation Sans", sans-serif; }

/* player */
.player { display: flex; height: 86px; border-bottom: 1px solid #888; }
.play { width: 73px; height: 73px; margin: 6px 6px 0 1px; justify-content: center; background: #006487; }
.playtri { width: 10px; height: 22px; }
.player-main { flex: 1; padding: 5px 0 0 5px; margin-bottom: 5px; border-left: 1px solid #888; }
.status { height: 35px; padding-left: 174px; background: #c5dde4; text-align: center; font: bold 16px/34px "Open Sans", sans-serif; color: #333; }
.transport { display: flex; align-items: center; height: 34px; margin: 6px 0 0 7px; }
.seek { width: 21px; height: 19px; }
.step { width: 17px; height: 16px; }
.transport button { margin-right: 17px; }
.transport .value + button { margin-left: 12px; }
.value { display: flex; align-items: center; justify-content: space-between; width: 99px; height: 34px; padding: 1px 5px 0 0; border: 1px solid #ddd; color: #555; font-weight: 700; margin-left: -4px; }
.value input { width: 51px; text-align: right; }
.wide { width: 107px; }
.wide input { width: 62px; }
.endline { width: 1px; height: 34px; background: #777; }

/* bottom bars */
.sheets { height: 26px; background: #f0f0f0; }
.sheet { width: 49px; height: 25px; justify-content: center; background: #fff; border: 1px solid #999; border-width: 0 1px 1px 0; color: #5a9db0; font-weight: 700; font-size: 15px; }
.taskbar { display: flex; height: 29px; background: #006487; border-bottom: 3px solid #559fb7; color: #fff; }
.apps { width: 23px; height: 18px; margin: 4px 16px 0 0; }
.task { font-size: 15px; height: 24px; padding-top: 1px; }
.active { margin-left: 9px; padding: 1px 9px 0; background: #f0f0f0; color: #5a9db0; font-weight: 700; }
```
FILE: app.js
```js
// Waterfall colour map and its log scale.
var BANDS = ['#ff3333', '#f57c00', '#f5b400', '#ebd800', '#ffff44', '#e6f614', '#c3ec14', '#96e12d',
  '#32e614', '#00dc32', '#00c846', '#00be69', '#00c896', '#00dccd', '#00e6ff', '#00beff', '#0096ff',
  '#006eff', '#0050ff', '#001eff', '#0019c8', '#001e8c'];
// low to high response
var RAMP = [[0, 225, 235], [0, 212, 195], [0, 200, 150], [0, 192, 108], [0, 198, 72], [0, 214, 45],
  [50, 228, 25], [140, 228, 35], [205, 232, 25]];
var RIDGES = [
  { w: 8, a: 2.3, p: [[88, 294], [120, 250], [150, 215], [205, 155], [250, 95], [305, 40], [335, 0]] },
  { w: 8, a: 1.9, p: [[185, 240], [210, 220], [250, 190], [290, 165], [312, 142], [355, 112]] },
  { w: 9, a: 1.8, p: [[390, 70], [420, 40], [445, 22], [470, 0]] },
  { w: 14, a: 1.0, p: [[250, 250], [300, 225], [350, 200]] },
  { w: 18, a: 1.0, p: [[150, 90], [165, 40], [175, 0]] }
];
var SPOTS = [
  [256, 85, 9, 20, 2.6], [208, 219, 9, 9, 1.8], [302, 158, 8, 12, 0.9], [190, 180, 10, 10, 0.7],
  [258, 125, 8, 20, 1.2], [90, 145, 22, 50, -1.5], [82, 245, 20, 40, -1.6], [120, 110, 35, 45, -0.6],
  [290, 215, 18, 35, -1.4], [225, 285, 30, 14, -1.7], [375, 250, 40, 50, -1.1], [355, 110, 22, 40, -0.7],
  [440, 260, 50, 45, -0.9], [490, 100, 18, 40, 1.2], [440, 125, 25, 30, 0.9], [380, 5, 20, 15, 1.2],
  [420, 10, 60, 40, 0.4]
];

function hash(x, y) {
  var n = Math.imul(x, 374761393) + Math.imul(y, 668265263) | 0;
  n = Math.imul(n ^ (n >>> 13), 1274126177);
  return ((n ^ (n >>> 16)) >>> 0) / 4294967295;
}
function noise(x, y) {
  var xi = Math.floor(x), yi = Math.floor(y), u = x - xi, v = y - yi;
  u = u * u * (3 - 2 * u); v = v * v * (3 - 2 * v);
  var a = hash(xi, yi), b = hash(xi + 1, yi), c = hash(xi, yi + 1), d = hash(xi + 1, yi + 1);
  return (a + (b - a) * u) * (1 - v) + (c + (d - c) * u) * v;
}
function ridgeDistance(p, x, y) {
  var best = 1e9;
  for (var i = 1; i < p.length; i++) {
    var ax = p[i - 1][0], ay = p[i - 1][1], dx = p[i][0] - ax, dy = p[i][1] - ay;
    var t = Math.max(0, Math.min(1, ((x - ax) * dx + (y - ay) * dy) / (dx * dx + dy * dy)));
    best = Math.min(best, Math.hypot(x - ax - t * dx, y - ay - t * dy));
  }
  return best;
}
// each frequency column carries its own streaks
function streakAt(x, y) {
  var col = Math.floor(x / 1.5), pos = y / 13 + hash(col, 9) * 40;
  var k = Math.floor(pos), f = pos - k;
  f = f * f * (3 - 2 * f);
  return hash(col, k) * (1 - f) + hash(col, k + 1) * f - 0.5;
}
function level(x, y) {
  var streak = streakAt(x, y);
  if (x < 39) {
    var s = hash(Math.floor(x / 1.6), 77);
    return 5 + s * 2.6 + streak * 1.6 + (x > 20 && x < 28 ? 0.6 : 0);
  }
  var v = 3.2 - y / 294 * 0.8 + (noise(x / 30, y / 45) - 0.5) * 1.2 + streak * 1.4;
  RIDGES.forEach(function (r) {
    var d = ridgeDistance(r.p, x, y) / r.w;
    if (d < 3) v += r.a * Math.exp(-d * d) * (0.5 + 0.9 * noise(x / 14, y / 14 + 50));
  });
  SPOTS.forEach(function (s) {
    var dx = (x - s[0]) / s[2], dy = (y - s[1]) / s[3], q = dx * dx + dy * dy;
    if (q < 8) v += s[4] * Math.exp(-q);
  });
  return v;
}
function drawMap(c) {
  var w = c.width = c.clientWidth, h = c.height = c.clientHeight, g = c.getContext('2d');
  var img = g.createImageData(w, h), i = 0;
  for (var y = 0; y < h; y++) for (var x = 0; x < w; x++) {
    var v = Math.max(0, Math.min(7.99, level(x * 498 / w, y * 294 / h))), k = Math.floor(v), f = v - k;
    for (var n = 0; n < 3; n++) img.data[i++] = RAMP[k][n] * (1 - f) + RAMP[k + 1][n] * f;
    img.data[i++] = 255;
  }
  g.putImageData(img, 0, 0);
  g.fillStyle = '#000';
  for (var t = 1; t < 16; t++) {
    var tx = Math.round(t * w / 16), len = t % 10 === 0 ? 16 : t % 5 === 0 ? 8 : 4;
    g.fillRect(tx, 0, 1, len); g.fillRect(tx, h - len, 1, len);
  }
  for (t = 0; t < 11; t++) {
    var ty = Math.round((20 + t * 25) * h / 294), l = t % 2 ? 15 : 7;
    g.fillRect(0, ty, l, 1); g.fillRect(w - l, ty, l, 1);
  }
  g.strokeRect(0.5, 0.5, w - 1, h - 1);
}
function drawScale(c) {
  var w = c.width = c.clientWidth, h = c.height = c.clientHeight, g = c.getContext('2d');
  BANDS.forEach(function (b, i) {
    var top = Math.round(i * h / 22);
    g.fillStyle = b; g.fillRect(0, top, w, Math.round((i + 1) * h / 22) - top);
  });
  g.fillStyle = '#000';
  g.fillRect(w - 1, 0, 1, h);
  for (var d = 0; d < 6; d++) for (var m = 1; m < 10; m++) {
    var y = Math.round((d + 1 - Math.log10(m)) * h / 6) - 1, l = m === 1 ? 10 : 5;
    g.fillRect(w - l, y, l, 1);
  }
  g.fillRect(w - 10, 0, 10, 1);
}
function draw() {
  drawMap(document.getElementById('map'));
  drawScale(document.getElementById('scale'));
}
draw();
window.addEventListener('resize', draw);
```
